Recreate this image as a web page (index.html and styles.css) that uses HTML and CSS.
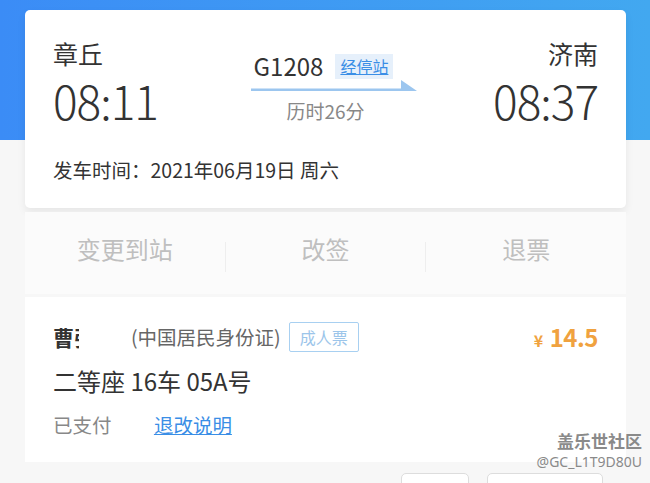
FILE: index.html
```html
<!DOCTYPE html>
<html lang="zh-CN">
<head>
  <meta charset="UTF-8" />
  <meta name="viewport" content="width=device-width, initial-scale=1.0" />
  <title>订单详情</title>
  <link rel="stylesheet" href="styles.css">
</head>
<body>
  <div class="page">
    <!-- 车次信息 -->
    <div class="trip-card">
      <div class="trip-row">
        <div class="station">
          <div class="station-name">章丘</div>
          <div class="station-time">08:11</div>
        </div>
        <div class="train">
          <div class="train-line">
            <span class="train-no">G1208</span>
            <a class="stops" href="#">经停站</a>
          </div>
          <svg class="arrow" width="166" height="12" viewBox="0 0 166 12">
            <path d="M0 8.5 H150 V0 L166 11 H0 Z" fill="#9cc6ef" />
          </svg>
          <div class="duration">历时26分</div>
        </div>
        <div class="station right">
          <div class="station-name">济南</div>
          <div class="station-time">08:37</div>
        </div>
      </div>
      <div class="depart">发车时间：2021年06月19日 周六</div>
    </div>

    <!-- 操作 -->
    <div class="actions">
      <div class="action">变更到站</div>
      <div class="action">改签</div>
      <div class="action">退票</div>
    </div>

    <!-- 乘客 -->
    <div class="passenger">
      <div class="p-head">
        <span class="p-name">曹弘</span>
        <span class="p-id">(中国居民身份证)</span>
        <span class="p-type">成人票</span>
        <span class="p-price"><small>¥</small> 14.5</span>
      </div>
      <div class="p-seat">二等座 16车 05A号</div>
      <div class="p-foot">
        <span class="p-paid">已支付</span>
        <a class="p-rule" href="#">退改说明</a>
      </div>
    </div>

    <div class="bottom-btns">
      <div class="btn-outline small"></div>
      <div class="btn-outline"></div>
    </div>
  </div>

  <div class="watermark">
    <div class="wm-title">盖乐世社区</div>
    <div class="wm-user">@GC_L1T9D80U</div>
  </div>
</body>
</html>
```

FILE: styles.css
```css
:root {
  --blue: #3a8ee6;
  --text: #333;
  --muted: #888;
  --page: #f7f7f7;
}

body {
  margin: 0;
  font-family: "Noto Sans CJK SC", "Noto Sans", sans-serif;
  color: var(--text);
  background:
    linear-gradient(to right, #3b8cf6, #42a8f0) top / 100% 140px no-repeat,
    var(--page);
  height: 483px;
  overflow: hidden;
}

.page {
  padding: 10px 24px 0 25px;
}

.trip-card {
  background: #fff;
  border-radius: 5px;
  height: 198px;
  box-sizing: border-box;
  padding: 26px 28px 0 28px;
  box-shadow: 0 4px 8px rgba(0,0,0,0.07);
}

.trip-row {
  display: flex;
  justify-content: space-between;
}

.station-name {
  font-size: 25px;
  line-height: 34px;
}

.station-time {
  font-size: 46px;
  font-weight: 300;
  line-height: 52px;
  margin-top: 4px;
  letter-spacing: -1px;
}

.station.right {
  text-align: right;
}

.train {
  display: flex;
  flex-direction: column;
  align-items: center;
  padding-top: 15px;
  margin-left: 16px;
}

.train-line {
  display: flex;
  align-items: center;
  gap: 12px;
  margin-right: 20px;
}

.train-no {
  font-size: 24px;
  line-height: 30px;
}

.stops {
  font-size: 16px;
  line-height: 25px;
  padding: 0 5px;
  background: #e6f0fb;
  color: var(--blue);
}

.arrow {
  display: block;
  margin-top: -1px;
}

.duration {
  font-size: 19px;
  color: var(--muted);
  line-height: 26px;
  margin-top: 6px;
  margin-right: 16px;
}

.depart {
  font-size: 19.5px;
  line-height: 26px;
  margin-top: 31px;
}

.actions {
  display: flex;
  align-items: flex-start;
  height: 82px;
  box-sizing: border-box;
  padding-top: 30px;
  margin-top: 4px;
  background: #fbfbfb;
}

.action {
  flex: 1;
  text-align: center;
  font-size: 24px;
  color: #bfbfbf;
  line-height: 14px;
  padding-bottom: 16px;
  border-left: 1px solid #eee;
}

.action:first-child {
  border-left: none;
}

.passenger {
  background: #fff;
  margin-top: 3px;
  height: 165px;
  box-sizing: border-box;
  padding: 22px 28px 0 28px;
}

.p-head {
  display: flex;
  align-items: center;
}

.p-name {
  display: inline-block;
  width: 26px;
  overflow: hidden;
  white-space: nowrap;
  font-size: 21px;
  font-weight: bold;
  line-height: 30px;
}

.p-id {
  margin-left: 52px;
  font-size: 19.5px;
  color: #666;
}

.p-type {
  margin-left: 8px;
  border: 1px solid #a8d0f1;
  border-radius: 2px;
  color: #9cc5ea;
  font-size: 16px;
  line-height: 28px;
  padding: 0 10px;
}

.p-price {
  margin-left: auto;
  color: #f0a23f;
  font-size: 24px;
  font-weight: bold;
  letter-spacing: -0.5px;
}

.p-price small {
  font-size: 16px;
  margin-right: 2px;
}

.p-seat {
  font-size: 24px;
  line-height: 30px;
  margin-top: 12px;
}

.p-foot {
  margin-top: 16px;
  font-size: 19.5px;
  line-height: 26px;
}

.p-paid {
  color: var(--muted);
}

.p-rule {
  margin-left: 38px;
  color: var(--blue);
}

.bottom-btns {
  display: flex;
  justify-content: flex-end;
  gap: 18px;
  padding: 11px 23px 0 0;
}

.btn-outline {
  width: 114px;
  height: 30px;
  border: 1px solid #ddd;
  border-radius: 5px;
  background: #fff;
}

.btn-outline.small {
  width: 66px;
}

.watermark {
  position: absolute;
  right: 8px;
  top: 430px;
  text-align: right;
  color: #8a8a8a;
}

.wm-title {
  font-size: 17px;
  line-height: 22px;
  font-weight: 600;
}

.wm-user {
  font-size: 14px;
  line-height: 20px;
  font-family: "Noto Sans", sans-serif;
}
```
